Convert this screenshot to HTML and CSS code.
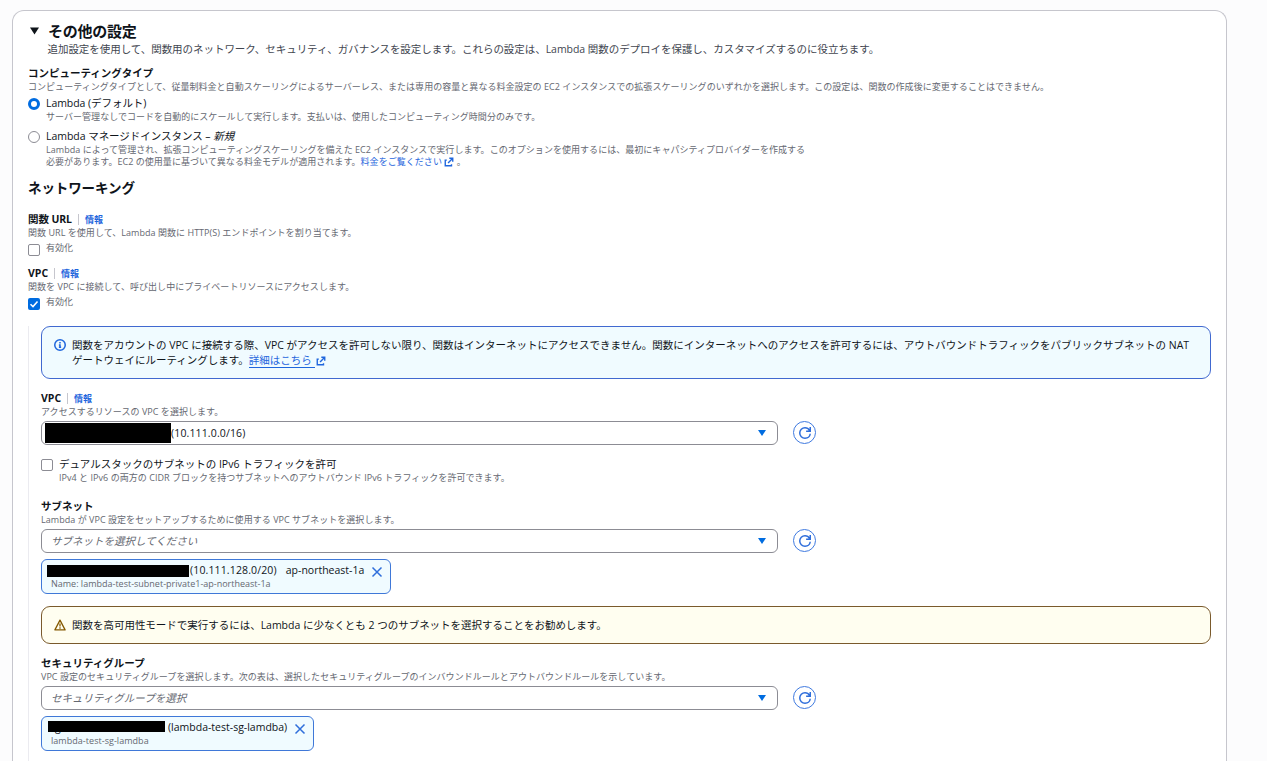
FILE: index.html
```html
<!DOCTYPE html>
<html lang="ja">
<head>
<meta charset="utf-8">
<title>その他の設定</title>
<link rel="stylesheet" href="styles.css">
</head>
<body>
<svg class="defs" width="0" height="0">
  <symbol id="ext" viewBox="0 0 16 16"><path d="M8.500 2H14v5.500M6.500 9.500 14 2M4.500 5H2v9h10v-2.500"/></symbol>
  <symbol id="refresh" viewBox="0 0 16 16"><path d="M15 9c-.5 3.500-3.500 6-7 6-3.870 0-7-3.130-7-7s3.130-7 7-7c2.600 0 4.900 1.400 6.100 3.600M15 0v5.500H9.500"/></symbol>
  <symbol id="close" viewBox="0 0 16 16"><path d="m2 2 12 12M14 2 2 14"/></symbol>
</svg>
<main class="card">
  <header class="head">
    <svg class="caret" viewBox="0 0 10 8"><path d="M0 0h10L5 8z"/></svg>
    <h2>その他の設定</h2>
  </header>
  <p class="lead">追加設定を使用して、関数用のネットワーク、セキュリティ、ガバナンスを設定します。これらの設定は、Lambda 関数のデプロイを保護し、カスタマイズするのに役立ちます。</p>

  <section class="compute">
    <div class="label">コンピューティングタイプ</div>
    <div class="desc">コンピューティングタイプとして、従量制料金と自動スケーリングによるサーバーレス、または専用の容量と異なる料金設定の EC2 インスタンスでの拡張スケーリングのいずれかを選択します。この設定は、関数の作成後に変更することはできません。</div>
    <div class="option first">
      <span class="radio on"></span>
      <div>
        <div class="text">Lambda (デフォルト)</div>
        <div class="desc">サーバー管理なしでコードを自動的にスケールして実行します。支払いは、使用したコンピューティング時間分のみです。</div>
      </div>
    </div>
    <div class="option second">
      <span class="radio"></span>
      <div>
        <div class="text">Lambda マネージドインスタンス – <em>新規</em></div>
        <div class="desc">Lambda によって管理され、拡張コンピューティングスケーリングを備えた EC2 インスタンスで実行します。このオプションを使用するには、最初にキャパシティプロバイダーを作成する<br>必要があります。EC2 の使用量に基づいて異なる料金モデルが適用されます。<a>料金をご覧ください <svg class="ext"><use href="#ext"/></svg></a> 。</div>
      </div>
    </div>
  </section>

  <h3>ネットワーキング</h3>

  <section class="field url">
    <div class="label">関数 URL<a class="info">情報</a></div>
    <div class="desc">関数 URL を使用して、Lambda 関数に HTTP(S) エンドポイントを割り当てます。</div>
    <div class="check"><span class="box"></span><span class="desc">有効化</span></div>
  </section>
  <section class="field vpc">
    <div class="label">VPC<a class="info">情報</a></div>
    <div class="desc">関数を VPC に接続して、呼び出し中にプライベートリソースにアクセスします。</div>
    <div class="check"><span class="box on"><svg viewBox="0 0 12 12"><path d="M2.500 6.200 5 8.600l4.500-5.200"/></svg></span><span class="desc">有効化</span></div>
  </section>

  <section class="nested">
    <div class="alert info-alert">
      <svg class="status" viewBox="0 0 16 16"><circle cx="8" cy="8" r="7"/><path d="M8 11V8H6.500M8 4v2M6.500 11h3"/></svg>
      <div>関数をアカウントの VPC に接続する際、VPC がアクセスを許可しない限り、関数はインターネットにアクセスできません。関数にインターネットへのアクセスを許可するには、アウトバウンドトラフィックをパブリックサブネットの NAT<br>ゲートウェイにルーティングします。<a><span class="under">詳細はこちら </span><svg class="ext"><use href="#ext"/></svg></a></div>
    </div>

    <div class="group vpc-select">
      <div class="label">VPC<a class="info">情報</a></div>
      <div class="desc">アクセスするリソースの VPC を選択します。</div>
      <div class="row">
        <div class="select filled"><span class="mask mask-vpc"></span><span class="cidr">(10.111.0.0/16)</span><svg class="arrow" viewBox="0 0 8 6"><path d="M0 0h8L4 6z"/></svg></div>
        <span class="refresh"><svg><use href="#refresh"/></svg></span>
      </div>
    </div>

    <div class="option dual">
      <span class="box"></span>
      <div>
        <div class="text">デュアルスタックのサブネットの IPv6 トラフィックを許可</div>
        <div class="desc">IPv4 と IPv6 の両方の CIDR ブロックを持つサブネットへのアウトバウンド IPv6 トラフィックを許可できます。</div>
      </div>
    </div>

    <div class="group subnet">
      <div class="label">サブネット</div>
      <div class="desc">Lambda が VPC 設定をセットアップするために使用する VPC サブネットを選択します。</div>
      <div class="row">
        <div class="select"><em>サブネットを選択してください</em><svg class="arrow" viewBox="0 0 8 6"><path d="M0 0h8L4 6z"/></svg></div>
        <span class="refresh"><svg><use href="#refresh"/></svg></span>
      </div>
      <div class="token token-subnet">
        <div>
          <div class="token-main"><span class="mask mask-subnet"></span><span class="cidr">(10.111.128.0/20)</span><span class="zone">ap-northeast-1a</span></div>
          <div class="desc tight">Name: lambda-test-subnet-private1-ap-northeast-1a</div>
        </div>
        <svg class="close"><use href="#close"/></svg>
      </div>
    </div>

    <div class="alert warn-alert">
      <svg class="status" viewBox="0 0 16 16"><path d="M8 1.500 1.200 14.500h13.600zM8 6v4M8 11v2"/></svg>
      <div>関数を高可用性モードで実行するには、Lambda に少なくとも 2 つのサブネットを選択することをお勧めします。</div>
    </div>

    <div class="group sg">
      <div class="label">セキュリティグループ</div>
      <div class="desc">VPC 設定のセキュリティグループを選択します。次の表は、選択したセキュリティグループのインバウンドルールとアウトバウンドルールを示しています。</div>
      <div class="row">
        <div class="select"><em>セキュリティグループを選択</em><svg class="arrow" viewBox="0 0 8 6"><path d="M0 0h8L4 6z"/></svg></div>
        <span class="refresh"><svg><use href="#refresh"/></svg></span>
      </div>
      <div class="token token-sg">
        <div>
          <div class="token-main"><span class="sg-id">sg-</span><span>(lambda-test-sg-lamdba)</span></div>
          <div class="desc">lambda-test-sg-lamdba</div>
        </div>
        <svg class="close"><use href="#close"/></svg>
      </div>
    </div>
  </section>
</main>
</body>
</html>
```
FILE: styles.css
```css
* { box-sizing: border-box; }
html, body { margin: 0; height: 761px; overflow: hidden; }
body {
  background: #fcfcfd;
  color: #0f141a;
  font: 10.5px/15px "Open Sans", "Noto Sans CJK JP", sans-serif;
  padding: 10px 40px 0 12px;
  white-space: nowrap;
}
.defs { position: absolute; }
svg { display: block; fill: none; stroke: currentColor; stroke-width: 2; }
h2, h3, p { margin: 0; }
.card {
  height: 751px;
  background: #fff;
  border: 1px solid #c6c6cd;
  border-bottom: 0;
  border-radius: 12px 12px 0 0;
  padding: 11px 15px 0;
}
.head { display: flex; align-items: center; height: 18px; }
.caret { width: 9px; height: 8px; margin: 0 9px 0 2px; fill: #0f141a; stroke: none; }
h2 { font-size: 15px; line-height: 18px; font-weight: 700; letter-spacing: -0.26px; }
.lead { color: #424650; padding: 2px 0 0 19.5px; letter-spacing: -0.045px; }
.compute { margin-top: 9px; }
.label { font-weight: 700; height: 15px; display: flex; align-items: center; }
.desc { color: #656871; font-size: 9px; line-height: 12px; letter-spacing: 0.04px; }
a { color: #1f66dd; }
.option { display: flex; gap: 6px; }
.option.first { margin-top: 3px; }
.option.second { margin-top: 6px; }
.option.second .text { letter-spacing: -0.04px; }
.option.first .text { letter-spacing: -0.06px; }
.radio {
  width: 12px; height: 12px; flex: none; margin-top: 2px;
  border: 1px solid #8c8c94; border-radius: 50%; background: #fff;
}
.radio.on { border: 3.500px solid #006ce0; }
.ext { display: inline-block; width: 10px; height: 10px; vertical-align: -1.500px; stroke-width: 2.200; }
h3 { font-size: 13.5px; line-height: 18px; margin-top: 11px; letter-spacing: -0.1px; }
.url { margin-top: 15px; }
.url > .label { letter-spacing: -0.1px; }
.vpc { margin-top: 10px; }
.info {
  font-size: 9px; line-height: 11px; border-left: 1px solid #c6c6cd;
  margin-left: 6px; padding-left: 6px; letter-spacing: 0;
}
.check { display: flex; gap: 6px; height: 14px; margin-top: 3px; }
.check .box { margin-top: 2px; }
.box {
  width: 12px; height: 12px; flex: none; border: 1px solid #8c8c94;
  border-radius: 2px; background: #fff;
}
.box.on { background: #006ce0; border: 0; color: #fff; }
.box.on svg { width: 12px; height: 12px; stroke-width: 1.500; }
.nested { margin-top: 16px; border-left: 1px solid #ebebf0; padding-left: 12px; height: 435px; }
.alert { display: flex; gap: 6px; border: 1px solid; border-radius: 9px; padding: 11px 12px; }
.alert > div { color: #0f141a; }
.info-alert { height: 53px; color: #4169d0; background: #f0fbff; }
.warn-alert { height: 38px; color: #7a5a2c; background: #fffef0; margin-top: 12px; }
.status { width: 12px; height: 12px; flex: none; margin-top: 1px; }
.info-alert .status { color: #1f66dd; }
.warn-alert .status { color: #855900; stroke-width: 1.700; stroke-linejoin: round; }
.warn-alert > div { letter-spacing: -0.02px; }
.under { display: inline-block; height: 15px; border-bottom: 1px solid #1f66dd; white-space: pre; margin-right: 1px; vertical-align: top; }
.vpc-select { margin-top: 12px; }
.row { display: flex; gap: 15px; margin-top: 3px; height: 24px; }
.select {
  width: 737px; height: 24px; border: 1px solid #8c8c94; border-radius: 6px;
  background: #fff; padding: 0 11px 0 9px; display: flex; align-items: center;
}
.select.filled { padding-left: 3px; }
.select em { color: #656871; }
.arrow { width: 8px; height: 6px; margin-left: auto; fill: #006ce0; stroke: none; }
.refresh {
  width: 23px; height: 23px; border: 1px solid #3f7ae0; border-radius: 50%;
  display: flex; align-items: center; justify-content: center; color: #2f6edb;
}
.refresh svg { width: 12px; height: 12px; margin-left: 1px; }
.mask { background: #000; flex: none; }
.mask-vpc { width: 126px; height: 20px; }
.mask-subnet { width: 142px; height: 12px; margin-right: 1px; }
.cidr { letter-spacing: 0.14px; }
.sg-id { position: relative; width: 117px; margin-right: 3px; padding-left: 2px; }
.sg-id::after { content: ""; position: absolute; left: 0; top: 1px; width: 117px; height: 11px; background: #000; }
.dual { margin-top: 12px; }
.dual .box { margin-top: 2px; }
.subnet { margin-top: 15px; }
.token {
  display: flex; justify-content: space-between; height: 35px; margin-top: 6px;
  border: 1px solid #3f78d8; border-radius: 6px; background: #f0fbff; padding: 3px 7px 0 5px;
}
.token-subnet { width: 350px; }
.token-sg { width: 273px; }
.token-main { display: flex; align-items: center; height: 15px; }
.token .desc { padding-left: 4px; }
.token .tight { letter-spacing: 0; }
.token-sg .token-main { padding-left: 1px; }
.zone { margin-left: 9px; }
.close { width: 12px; height: 12px; margin-top: 3px; color: #2f6edb; }
.sg { margin-top: 12px; }
```
